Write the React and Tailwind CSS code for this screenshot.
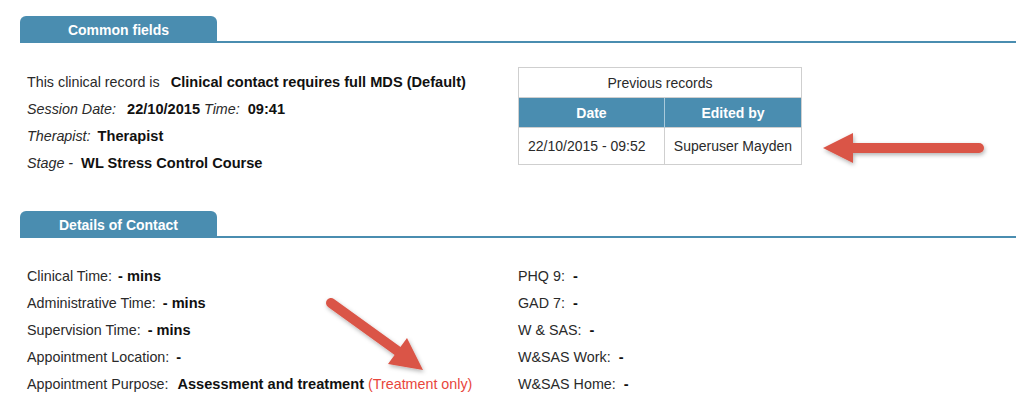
import React from 'react';

const BLUE = 'bg-[#4a8db0]';

function SectionTab({ title }) {
  return (
    <div className="flex items-end h-[27px]">
      <div className={`w-[197px] h-full rounded-t-[6px] ${BLUE} flex items-center justify-center pt-[1px] text-[14px] text-white font-bold`}>
        {title}
      </div>
      <div className={`flex-1 h-[2px] ${BLUE}`} />
    </div>
  );
}

function Row({ children }) {
  return <div className="h-[27px] leading-[27px] whitespace-nowrap">{children}</div>;
}

const B = ({ children, className = '' }) => (
  <span className={`font-bold text-[14.6px] text-[#111] ${className}`}>{children}</span>
);

const contactLeft = [
  ['Clinical Time:', '- mins', 'ml-[6px]'],
  ['Administrative Time:', '- mins', 'ml-[7px]'],
  ['Supervision Time:', '- mins', 'ml-[7px]'],
  ['Appointment Location:', '-', 'ml-[7px]'],
];

const contactRight = ['PHQ 9:', 'GAD 7:', 'W & SAS:', 'W&SAS Work:', 'W&SAS Home:'];

export default function App() {
  return (
    <div className="relative w-full min-h-[413px] bg-white text-[14.3px] text-[#2a2a2a] font-['Liberation_Sans',Arial,sans-serif]">
      <div className="pt-4 pl-5 pr-2">
        <SectionTab title="Common fields" />

        {/* common fields body */}
        <div className="flex mt-[24px]">
          <div className="w-[498px] pl-[7px] pt-[2px]">
            <Row>
              This clinical record is<B className="ml-[11px]">Clinical contact requires full MDS (Default)</B>
            </Row>
            <Row>
              <i>Session Date:</i>
              <B className="ml-[11px]">22/10/2015</B> <i>Time:</i>
              <B className="ml-[8px]">09:41</B>
            </Row>
            <Row>
              <i>Therapist:</i>
              <B className="ml-[7px]">Therapist</B>
            </Row>
            <Row>
              <i>Stage -</i>
              <B className="ml-[8px]">WL Stress Control Course</B>
            </Row>
          </div>

          <table className="w-[284px] h-[98px] border-collapse border border-[#cfcfcf] self-start text-[14px]">
            <thead>
              <tr>
                <th colSpan={2} className="h-[30px] pt-[1px] font-normal text-[#2a2a2a] border border-[#cfcfcf]">
                  Previous records
                </th>
              </tr>
              <tr className={`${BLUE} text-white`}>
                <th className="h-[30px] pt-[1px] w-[146px] border-r border-[#a9cadb]">Date</th>
                <th className="h-[30px] pt-[1px]">Edited by</th>
              </tr>
            </thead>
            <tbody>
              <tr>
                <td className="h-[36px] pl-[9px] border border-[#cfcfcf] whitespace-nowrap">22/10/2015 - 09:52</td>
                <td className="h-[36px] text-center border border-[#cfcfcf] whitespace-nowrap">Superuser Mayden</td>
              </tr>
            </tbody>
          </table>
        </div>

        <div className="mt-[34px]">
          <SectionTab title="Details of Contact" />
        </div>

        {/* details of contact body */}
        <div className="flex mt-[25px]">
          <div className="w-[498px] pl-[7px]">
            {contactLeft.map(([label, value, gap]) => (
              <Row key={label}>
                {label}
                <B className={gap}>{value}</B>
              </Row>
            ))}
            <Row>
              Appointment Purpose:
              <B className="ml-[9px]">Assessment and treatment</B>{' '}
              <span className="text-[#e8463c]">(Treatment only)</span>
            </Row>
          </div>
          <div>
            {contactRight.map((label) => (
              <Row key={label}>
                {label}
                <B className="ml-[8px]">-</B>
              </Row>
            ))}
          </div>
        </div>
      </div>

      {/* annotation arrows */}
      <svg className="absolute inset-0 pointer-events-none" width="1024" height="413">
        <defs>
          <filter id="shadow" x="-20%" y="-20%" width="140%" height="160%">
            <feDropShadow dx="1" dy="2" stdDeviation="2" floodColor="#000" floodOpacity="0.3" />
          </filter>
        </defs>
        <g fill="#da5446" stroke="#da5446" filter="url(#shadow)">
          <line x1="979" y1="148" x2="848" y2="148" strokeWidth="10" strokeLinecap="round" />
          <polygon points="823,148 853,133 853,163" stroke="none" />
        </g>
        <g fill="#da5446" stroke="#da5446" filter="url(#shadow)">
          <line x1="331" y1="303" x2="399" y2="352" strokeWidth="10" strokeLinecap="round" />
          <polygon points="423,370 388,364 407,338" stroke="none" />
        </g>
      </svg>
    </div>
  );
}
